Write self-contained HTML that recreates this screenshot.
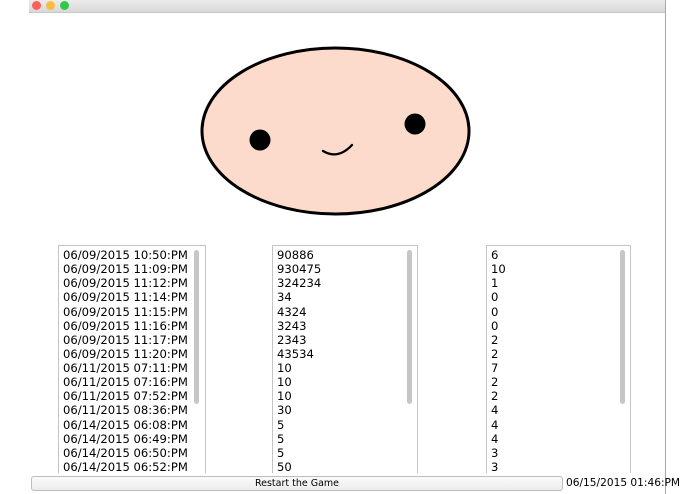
<!DOCTYPE html>
<html><head><meta charset="utf-8"><style>
body{margin:0;width:695px;height:494px;background:#fff;position:relative;overflow:hidden;font-family:"DejaVu Sans","Liberation Sans",sans-serif;}
.title{position:absolute;left:29px;top:0;width:636px;height:12px;background:linear-gradient(#ececec,#d8d8d8);border-bottom:1px solid #c8c8c8;}
.dot{position:absolute;top:1px;width:9px;height:9px;border-radius:50%;}
.vline{position:absolute;left:665px;top:0;width:1px;height:494px;background:#a8a8a8;}
.list{position:absolute;top:245px;height:227px;border:1px solid #c4c4c4;border-bottom:none;background:#fff;overflow:hidden;}
.list .rows{position:absolute;left:4px;top:2px;font-size:11.6px;line-height:14.13px;color:#000;white-space:pre;}
.sb{position:absolute;top:4px;width:5px;height:154px;background:#c6c6c6;border-radius:3px;}
.btn{position:absolute;left:31px;top:476px;width:530px;height:13px;border:1px solid #bdbdbd;border-radius:3px;background:linear-gradient(#fafafa,#ececec);font-size:9.5px;text-align:center;line-height:13px;}
.date{position:absolute;left:566px;top:477px;font-size:10.6px;line-height:13px;}
</style></head><body>
<div class="title">
<div class="dot" style="left:3px;background:#fc605c"></div>
<div class="dot" style="left:17px;background:#fdbc40"></div>
<div class="dot" style="left:31px;background:#34c84a"></div>
</div>
<div class="vline"></div>
<svg style="position:absolute;left:0;top:0" width="695" height="240">
<ellipse cx="335.5" cy="131" rx="133.5" ry="83" fill="#fddbcc" stroke="#000" stroke-width="3"/>
<circle cx="260" cy="140" r="10.5" fill="#000"/>
<circle cx="415" cy="124" r="10.5" fill="#000"/>
<path d="M323 151 Q338 160 352 145" fill="none" stroke="#000" stroke-width="2.3" stroke-linecap="round"/>
</svg>
<div class="list" style="left:58px;width:146px;"><div class="rows">06/09/2015 10:50:PM
06/09/2015 11:09:PM
06/09/2015 11:12:PM
06/09/2015 11:14:PM
06/09/2015 11:15:PM
06/09/2015 11:16:PM
06/09/2015 11:17:PM
06/09/2015 11:20:PM
06/11/2015 07:11:PM
06/11/2015 07:16:PM
06/11/2015 07:52:PM
06/11/2015 08:36:PM
06/14/2015 06:08:PM
06/14/2015 06:49:PM
06/14/2015 06:50:PM
06/14/2015 06:52:PM</div><div class="sb" style="left:135px"></div></div>
<div class="list" style="left:272px;width:144px;"><div class="rows">90886
930475
324234
34
4324
3243
2343
43534
10
10
10
30
5
5
5
50</div><div class="sb" style="left:134px"></div></div>
<div class="list" style="left:486px;width:143px;"><div class="rows">6
10
1
0
0
0
2
2
7
2
2
4
4
4
3
3</div><div class="sb" style="left:133px"></div></div>
<div class="btn">Restart the Game</div>
<div class="date">06/15/2015 01:46:PM</div>
</body></html>
